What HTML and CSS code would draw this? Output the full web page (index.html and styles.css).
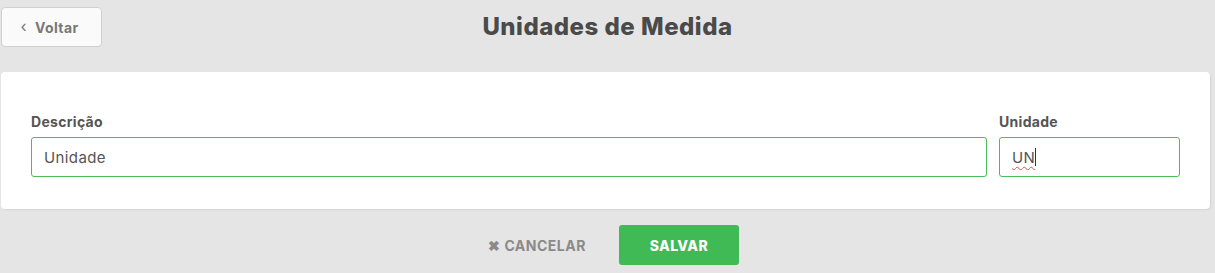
FILE: index.html
```html
<!DOCTYPE html>
<html lang="pt-BR">
<head>
    <meta charset="UTF-8">
    <meta name="viewport" content="width=device-width, initial-scale=1.0">
    <title>Unidades de Medida</title>
    <link rel="stylesheet" href="styles.css">
</head>
<body>
    <div class="page">
        <div class="top-bar">
            <button class="back-button"><span class="chevron">&#8249;</span> Voltar</button>
            <h1 class="page-title">Unidades de Medida</h1>
        </div>

        <!-- Form card -->
        <div class="card">
            <div class="field field-wide">
                <label class="field-label">Descrição</label>
                <input type="text" class="field-input" value="Unidade">
            </div>
            <div class="field field-small">
                <label class="field-label">Unidade</label>
                <div class="field-input fake-input"><span class="typed">UN</span><span class="caret"></span></div>
            </div>
        </div>

        <div class="actions">
            <button class="cancel-button">&#10006; CANCELAR</button>
            <button class="save-button">SALVAR</button>
        </div>
    </div>
</body>
</html>
```

FILE: styles.css
```css
body {
    margin: 0;
    background: #e5e5e5;
    font-family: "Inter", "Liberation Sans", sans-serif;
    color: #4a4a4a;
}
.page {
    padding: 7px 5px 0 1px;
}
.top-bar {
    position: relative;
    height: 40px;
    display: flex;
    align-items: center;
    justify-content: center;
}
.back-button {
    position: absolute;
    left: 0;
    top: 0;
    width: 101px;
    height: 40px;
    background: #fafafa;
    border: 1px solid #d0d0d4;
    border-radius: 4px;
    font-family: inherit;
    font-size: 14px;
    font-weight: 700;
    letter-spacing: 0.4px;
    color: #787878;
    display: flex;
    align-items: center;
    justify-content: center;
    gap: 8px;
    padding: 0 4px 0 0;
}
.chevron {
    font-size: 16px;
    font-weight: 400;
    margin-top: -2px;
}
.page-title {
    margin: 0;
    font-size: 24px;
    font-weight: 800;
    color: #4a4a4a;
    letter-spacing: 0.5px;
    margin-top: -1px;
    margin-left: 4px;
}
.card {
    margin-top: 25px;
    background: #fff;
    border-radius: 4px;
    box-shadow: 1px 1px 2px rgba(0, 0, 0, 0.08);
    padding: 41px 30px 32px 30px;
    display: flex;
    gap: 12px;
}
.field {
    display: flex;
    flex-direction: column;
}
.field-wide {
    flex: 1;
}
.field-small {
    width: 181px;
}
.field-label {
    font-size: 14px;
    font-weight: 700;
    letter-spacing: 0.3px;
    color: #555;
    margin-bottom: 7px;
}
.field-input {
    box-sizing: border-box;
    height: 40px;
    border: 1px solid #4cbb5a;
    border-radius: 3px;
    padding: 0 12px;
    font-family: inherit;
    font-size: 15px;
    letter-spacing: 0.4px;
    color: #555;
    outline: none;
}
.fake-input {
    display: flex;
    align-items: center;
}
.typed {
    text-decoration: underline wavy #e05050;
    text-decoration-thickness: 1px;
    text-underline-offset: 3px;
}
.caret {
    width: 1px;
    height: 18px;
    background: #333;
}
.actions {
    display: flex;
    justify-content: center;
    align-items: center;
    gap: 33px;
    margin-top: 16px;
    padding-left: 16px;
}
.cancel-button {
    background: none;
    border: none;
    font-family: inherit;
    font-size: 14px;
    font-weight: 700;
    letter-spacing: 0.5px;
    color: #8a8a8a;
    padding: 0;
}
.save-button {
    width: 120px;
    height: 40px;
    background: #3fba54;
    border: none;
    border-radius: 3px;
    color: #fff;
    font-family: inherit;
    font-size: 14px;
    font-weight: 800;
    letter-spacing: 0.4px;
}
```
